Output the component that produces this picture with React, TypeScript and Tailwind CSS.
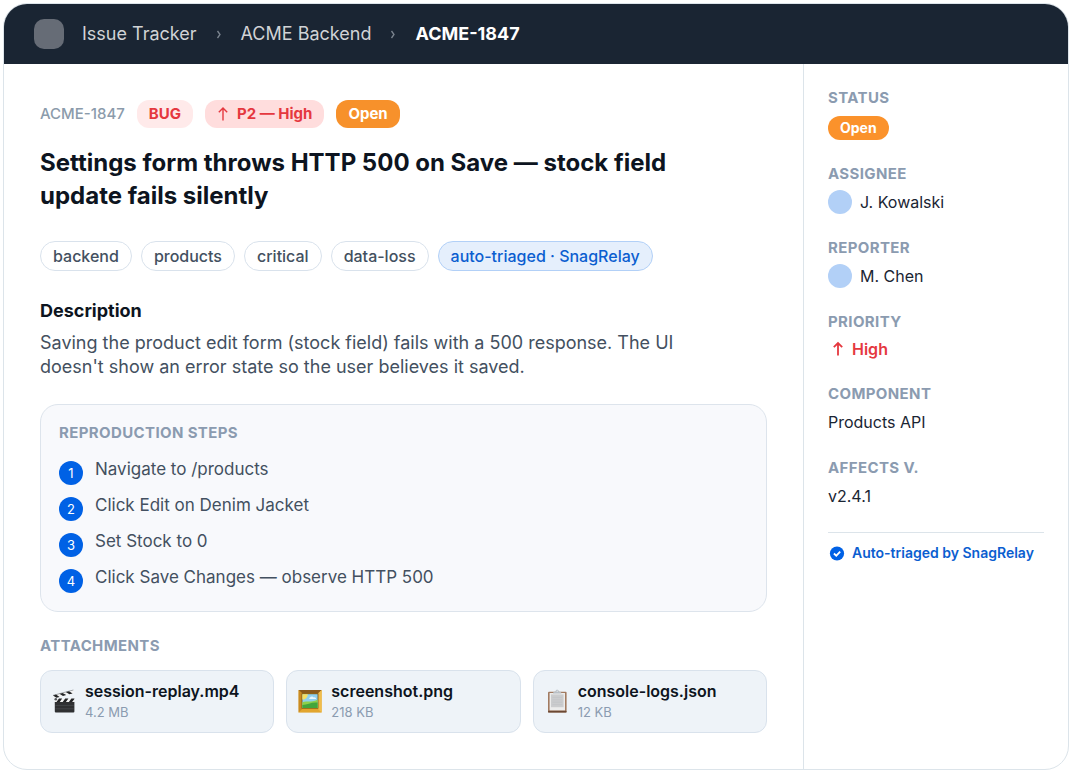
import type { ReactNode } from "react";

const tags = ["backend", "products", "critical", "data-loss"];

const steps = [
  "Navigate to /products",
  "Click Edit on Denim Jacket",
  "Set Stock to 0",
  "Click Save Changes — observe HTTP 500",
];

function ArrowUp({ bold = false }: { bold?: boolean }) {
  return (
    <svg viewBox="0 0 12 16" className="h-4 w-3 shrink-0" fill="none" stroke="currentColor" strokeWidth={bold ? 1.8 : 1.4} aria-hidden="true">
      <path d="M6 14.500V2M1.800 6.200 6 2l4.200 4.200" />
    </svg>
  );
}

function ClapperIcon() {
  return (
    <svg viewBox="0 0 24 24" className="size-6 shrink-0" aria-hidden="true">
      <rect x="2.8" y="12.600" width="19.600" height="11" rx="1" fill="#2f3032" />
      <path d="M3.400 16.400h18.400M3.400 19.800h18.400" stroke="#4b4d51" strokeWidth="0.700" />
      <rect x="2.800" y="9.600" width="19.600" height="3.400" fill="#f3f3f3" />
      <path d="M4.500 13 7 9.600h3.200L7.700 13zM10.700 13l2.500-3.400h3.200L13.900 13zM16.900 13l2.500-3.400h3v.4L20.100 13z" fill="#222325" />
      <path d="M1 6.400 21.400 1l.8 3L2 9.400z" fill="#f3f3f3" />
      <path d="m1 6.400 3-.8 3.600 2.300-3.200.9zM7.400 4.700l3.200-.8 3.600 2.200-3.200.9zM13.800 3l3.200-.8 3.600 2.200-3.200.9z" fill="#222325" />
      <path d="M1 6.400 21.400 1" stroke="#55585c" strokeWidth="0.500" />
      <circle cx="3.800" cy="10.200" r="1.300" fill="#55585c" />
    </svg>
  );
}

function PictureIcon() {
  return (
    <svg viewBox="0 0 24 24" className="size-6 shrink-0" aria-hidden="true">
      <rect x="0.600" y="1" width="23" height="22.600" fill="#e2a52e" />
      <path d="M.6 1h23l-3.600 3.600H4.200z" fill="#8a5a1c" />
      <path d="M.6 1v22.600l3.600-3.600V4.600z" fill="#c98a22" />
      <path d="M23.600 1v22.600L20 20V4.600z" fill="#f0bd4c" />
      <rect x="3.600" y="4.400" width="16.800" height="15.200" fill="#76520f" />
      <rect x="4.400" y="5.200" width="15.200" height="13.800" fill="#8fd0ee" />
      <path d="M4.400 5.200h5.400c0 3-2.400 5.200-5.400 5.400z" fill="#f5df62" />
      <path d="M12 8.600c1-1.600 3-1.400 3.600-.2 1.600-.4 2.600.6 2.400 1.600h-6.600c-.3-.7 0-1.200.6-1.400z" fill="#e9f6fb" />
      <path d="M4.400 13.200c4-1.800 7 1 15.200-2.400V19H4.400z" fill="#8ed04b" />
      <path d="M4.400 16c5-.2 9-3 15.200-2.400V19H4.400z" fill="#43a63c" />
    </svg>
  );
}

function ClipboardIcon() {
  return (
    <svg viewBox="0 0 24 24" className="size-6 shrink-0" aria-hidden="true">
      <rect x="3" y="2.800" width="18.600" height="20.800" rx="1" fill="#a27b61" />
      <rect x="3" y="21.800" width="18.600" height="1.800" rx="0.900" fill="#6b4834" />
      <rect x="4.600" y="4" width="15.400" height="17.400" fill="#ececec" />
      <rect x="6" y="5.400" width="12.600" height="12.800" fill="#cbccce" />
      <path d="M7.400 8.400h9.800M7.400 10.800h9.800M7.400 13.200h9.800M7.400 15.600h9.800" stroke="#bfc1c4" strokeWidth="0.600" />
      <path d="M8 4.400c0-1.400 1.200-1.700 2.500-1.900.1-1.100.8-1.700 1.700-1.700s1.600.6 1.700 1.700c1.300.2 2.500.5 2.500 1.900z" fill="#b9bfc5" />
      <circle cx="12.200" cy="2.200" r="0.600" fill="#eef2f6" />
    </svg>
  );
}

const attachments = [
  { name: "session-replay.mp4", size: "4.2 MB", icon: <ClapperIcon /> },
  { name: "screenshot.png", size: "218 KB", icon: <PictureIcon /> },
  { name: "console-logs.json", size: "12 KB", icon: <ClipboardIcon /> },
];

function Field({ label, children }: { label: string; children: ReactNode }) {
  return (
    <div>
      <dt className="text-[15px] leading-5 font-bold tracking-wide text-[#8b9bb0] uppercase">{label}</dt>
      <dd className="mt-1.5 text-base leading-6 text-[#1a2533]">{children}</dd>
    </div>
  );
}

function Person({ name }: { name: string }) {
  return (
    <span className="flex items-center gap-2">
      <span className="size-6 shrink-0 rounded-full bg-[#b2d0f7]" />
      {name}
    </span>
  );
}

function Separator() {
  return (
    <svg viewBox="0 0 6 10" className="h-2.5 w-1.5 shrink-0" fill="none" stroke="#7c8590" strokeWidth="1.300" aria-hidden="true">
      <path d="M1.500 2 4 5.500 1.500 9" />
    </svg>
  );
}

export default function App() {
  return (
    <div className="flex min-h-screen flex-col bg-white p-[3px] font-['Inter','Noto_Sans',sans-serif]">
      <div className="flex flex-1 flex-col overflow-hidden rounded-3xl border border-[#dce4ea] bg-white">
        <header className="flex h-[60px] items-center gap-[18px] bg-[#1a2533] px-[30px]">
          <span className="size-[30px] shrink-0 rounded-[10px] bg-[#666c76]" />
          <nav aria-label="Breadcrumb" className="flex items-center gap-[19px] text-lg text-[#d1d3d6]">
            <a href="#tracker">Issue Tracker</a>
            <Separator />
            <a href="#backend">ACME Backend</a>
            <Separator />
            <a href="#issue" aria-current="page" className="font-bold text-white">ACME-1847</a>
          </nav>
        </header>

        <div className="flex flex-1">
          <main className="min-w-0 flex-1 p-9">
            <div className="flex items-center gap-3 text-[15px] leading-7 font-bold">
              <span className="font-medium text-[#8b9bab]">ACME-1847</span>
              <span className="rounded-xl bg-[#ffeaea] px-3 text-[#e5383f]">BUG</span>
              <span className="flex items-center gap-2 rounded-xl bg-[#ffdddd] px-3 text-[#e5383f]">
                <ArrowUp />
                P2 — High
              </span>
              <span className="rounded-xl bg-[#f7912b] px-3 text-white">Open</span>
            </div>

            <h1 className="mt-[18px] max-w-[680px] text-2xl leading-[33px] font-bold text-[#0d1420]">
              Settings form throws HTTP 500 on Save — stock field update fails silently
            </h1>

            <ul className="mt-[29px] flex flex-wrap gap-[9px] text-base leading-7 font-medium text-[#435060]">
              {tags.map((tag) => (
                <li key={tag} className="rounded-full border border-[#d9e2ec] px-3">{tag}</li>
              ))}
              <li className="rounded-full border border-[#b2d0f7] bg-[#e5effc] px-3 text-[#0b5ed0]">auto-triaged · SnagRelay</li>
            </ul>

            <h2 className="mt-[26px] text-lg leading-7 font-bold text-[#0d1420]">Description</h2>
            <p className="mt-1.5 max-w-[680px] text-lg leading-6 text-[#435060]">
              Saving the product edit form (stock field) fails with a 500 response. The UI doesn't show an error state so the user believes it saved.
            </p>

            <section className="mt-[25px] rounded-[18px] border border-[#dde4ec] bg-[#f8f9fc] p-[18px]">
              <h2 className="text-[15px] leading-5 font-bold tracking-wide text-[#8b9bb0] uppercase">Reproduction steps</h2>
              <ol className="mt-3.5 flex flex-col gap-2 text-[17px] leading-6 text-[#435060]">
                {steps.map((step, i) => (
                  <li key={step} className="flex gap-3">
                    <span className="mt-1 size-6 shrink-0 rounded-full bg-[#0061e5] text-center text-[13px] leading-6 text-white">{i + 1}</span>
                    {step}
                  </li>
                ))}
              </ol>
            </section>

            <h2 className="mt-6 text-[15px] leading-5 font-bold tracking-wide text-[#8b9bb0] uppercase">Attachments</h2>
            <ul className="mt-3.5 grid grid-cols-3 gap-3">
              {attachments.map((file) => (
                <li key={file.name} className="flex items-center gap-[9px] rounded-xl border border-[#d9e2ec] bg-[#eef3f8] px-[11px] pt-2 pb-2.5">
                  {file.icon}
                  <div className="min-w-0">
                    <p className="text-base leading-6 font-semibold text-[#0d1420]">{file.name}</p>
                    <p className="text-[13px] leading-[19px] text-[#8b9bb0]">{file.size}</p>
                  </div>
                </li>
              ))}
            </ul>
          </main>

          <aside className="w-[265px] shrink-0 border-l border-[#dce4ea] px-6 pt-6">
            <dl className="flex flex-col gap-6">
              <div>
                <dt className="text-[15px] leading-5 font-bold tracking-wide text-[#8b9bb0] uppercase">Status</dt>
                <dd className="mt-2 flex">
                  <span className="rounded-full bg-[#fb922b] px-3 text-[14px] leading-6 font-bold text-white">Open</span>
                </dd>
              </div>
              <Field label="Assignee"><Person name="J. Kowalski" /></Field>
              <Field label="Reporter"><Person name="M. Chen" /></Field>
              <Field label="Priority">
                <span className="flex items-center gap-2 pl-1 leading-[22px] font-semibold text-[#e5383f]">
                  <ArrowUp bold />
                  High
                </span>
              </Field>
              <Field label="Component">Products API</Field>
              <Field label="Affects v.">v2.4.1</Field>
            </dl>
            <div className="mt-6 flex items-center gap-1.5 border-t border-[#dce4ea] pt-2.5 text-[14px] leading-5 font-semibold whitespace-nowrap text-[#0b5ed0]">
              <svg viewBox="0 0 18 18" className="size-[18px] shrink-0" aria-hidden="true">
                <circle cx="9" cy="9.500" r="7.100" fill="#0061e5" />
                <path d="m5.900 9.500 2.400 2.200 3.900-4" fill="none" stroke="white" strokeWidth="1.800" />
              </svg>
              Auto-triaged by SnagRelay
            </div>
          </aside>
        </div>
      </div>
    </div>
  );
}
